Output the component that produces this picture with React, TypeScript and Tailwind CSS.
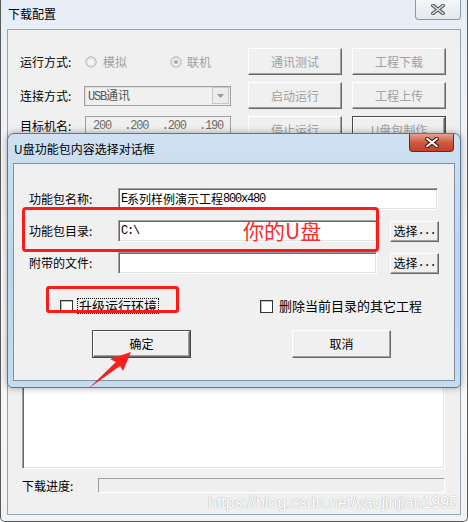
import React from "react";

const F = "font-['Noto_Sans_CJK_SC','Liberation_Sans',sans-serif]";
const M = "font-['Liberation_Mono','Noto_Sans_CJK_SC',monospace] text-[12px] tracking-[-1.2px]";

function Raised({
  children,
  className,
  disabled,
  def,
}: {
  children: React.ReactNode;
  className: string;
  disabled?: boolean;
  def?: boolean;
}) {
  return (
    <div
      className={
        className +
        " flex bg-[#f0f0f0] " +
        (def ? "border border-[#4a4a4a]" : "")
      }
    >
      <div
        className={
          "flex-1 flex items-center justify-center border border-t-white border-l-white border-b-[#696969] border-r-[#696969] shadow-[inset_-1px_-1px_0_#a0a0a0] text-[12px] leading-[14px] " +
          (disabled ? "text-[#a0a0a0]" : "text-black")
        }
      >
        {children}
      </div>
    </div>
  );
}

function Sunken({
  children,
  className,
}: {
  children?: React.ReactNode;
  className: string;
}) {
  return (
    <div
      className={
        className +
        " flex items-center border border-t-[#a0a0a0] border-l-[#a0a0a0] border-b-white border-r-white shadow-[inset_1px_1px_0_#696969,inset_-1px_-1px_0_#e3e3e3]"
      }
    >
      {children}
    </div>
  );
}

function Radio({ on }: { on?: boolean }) {
  return (
    <svg width="12" height="12" viewBox="0 0 12 12">
      <circle cx="6" cy="6" r="5.2" fill="#f4f4f4" stroke="#b4b4b4" strokeWidth="1" />
      <circle cx="6" cy="6" r="4" fill="none" stroke="#dadada" strokeWidth="1" />
      {on && <circle cx="6" cy="6" r="2" fill="#a8a8a8" />}
    </svg>
  );
}

function Check() {
  return (
    <div className="w-[13px] h-[13px] bg-white border border-[#333] shadow-[inset_1px_1px_0_#bdbdbd]" />
  );
}

export default function App() {
  return (
    <div className={"relative w-[468px] h-[522px] overflow-hidden bg-white " + F}>
      {/* main window */}
      <div className="w-full h-full flex flex-col border-l border-r border-b border-[#5a5a5a] rounded-b-[5px] bg-gradient-to-b from-[#e6edf5] via-[#fafbfc] to-[#f0f3f6]">
        <div className="h-[29px] flex items-start justify-between">
          <div className="pl-[7px] pt-[7px] text-[12px] leading-[14px] text-black">下载配置</div>
          <div className="mr-[6px] w-[46px] h-[20px] flex items-center justify-center border border-t-0 border-[#8b97a3] rounded-b-[4px] bg-gradient-to-b from-[#f4f6f8] to-[#e4e9ee]">
            <svg width="14" height="11" viewBox="0 0 14 11">
              <path d="M2 1.5 L12 9.5 M12 1.5 L2 9.5" stroke="#5c5c5c" strokeWidth="3.6" strokeLinecap="square" />
              <path d="M2 1.5 L12 9.5 M12 1.5 L2 9.5" stroke="#dcdcdc" strokeWidth="1.6" strokeLinecap="square" />
            </svg>
          </div>
        </div>
        <div className="mx-[6px] mb-[6px] flex-1 flex flex-col border border-[#9aa2aa] bg-[#f0f0f0]">
          {/* row 1 */}
          <div className="mt-[18px] h-[27px] pl-[12px] flex items-center">
            <div className="w-[228px] flex items-center text-[12px] leading-[14px]">
              <div className="w-[65px]">运行方式:</div>
              <Radio />
              <div className="ml-[6px] w-[67px] text-[#a0a0a0]">模拟</div>
              <Radio on />
              <div className="ml-[5px] text-[#a0a0a0]">联机</div>
            </div>
            <div className="flex gap-[10px]">
              <Raised className="w-[94px] h-[27px]" disabled>通讯测试</Raised>
              <Raised className="w-[94px] h-[27px]" disabled>工程下载</Raised>
            </div>
          </div>
          {/* row 2 */}
          <div className="mt-[7px] h-[27px] pl-[12px] flex items-center">
            <div className="w-[228px] flex items-center text-[12px] leading-[14px]">
              <div className="w-[64px]">连接方式:</div>
              <div className="w-[147px] h-[20px] flex items-center border border-[#a0a0a0] bg-[#f0f0f0] shadow-[inset_1px_1px_0_#e0e0e0]">
                <div className="flex-1 pl-[3px] text-[#555] leading-[14px]">
                  <span className={M}>USB</span>通讯
                </div>
                <div className="w-[17px] h-[17px] mr-[1px] flex items-center justify-center border border-[#c6c6c6] bg-[#ececec]">
                  <svg width="7" height="4" viewBox="0 0 7 4">
                    <path d="M0 0 L7 0 L3.5 4 Z" fill="#9a9a9a" />
                  </svg>
                </div>
              </div>
            </div>
            <div className="flex gap-[10px]">
              <Raised className="w-[94px] h-[27px]" disabled>启动运行</Raised>
              <Raised className="w-[94px] h-[27px]" disabled>工程上传</Raised>
            </div>
          </div>
          {/* row 3 */}
          <div className="mt-[7px] h-[27px] pl-[12px] flex items-start">
            <div className="w-[228px] flex items-center text-[12px] leading-[14px]">
              <div className="w-[65px]">目标机名:</div>
              <div className="w-[146px] h-[19px] flex items-center justify-between px-[7px] border border-[#a0a0a0] bg-[#f0f0f0] text-[#6d6d6d]">
                <span className={M}>200</span>
                <span className={M}>.200</span>
                <span className={M}>.200</span>
                <span className={M}>.190</span>
              </div>
            </div>
            <div className="flex gap-[10px]">
              <Raised className="w-[94px] h-[27px]" disabled>停止运行</Raised>
              <Raised className="w-[94px] h-[27px]" disabled def>U盘包制作</Raised>
            </div>
          </div>
          {/* list box */}
          <Sunken className="mt-[3px] ml-[14px] w-[423px] h-[323px] bg-white" />
          {/* progress */}
          <div className="mt-[9px] ml-[14px] h-[15px] flex items-center text-[12px] leading-[14px]">
            <div className="w-[76px]">下载进度:</div>
            <div className="w-[347px] h-[15px] border border-t-[#a0a0a0] border-l-[#a0a0a0] border-b-white border-r-white bg-[#efefef]" />
          </div>
        </div>
      </div>

      {/* dialog */}
      <div className="absolute left-[7px] top-[133px] w-[454px] h-[255px] flex flex-col rounded-t-[7px] rounded-b-[5px] border border-[#587796] bg-gradient-to-b from-[#cfe1f2] via-[#bcd5ec] to-[#c4dbf0] shadow-[0_0_7px_rgba(0,0,0,0.35)]">
        <div className="h-[29px] flex items-start justify-between">
          <div className="pl-[6px] pt-[8px] text-[12px] leading-[14px] text-black">U盘功能包内容选择对话框</div>
          <div className="mr-[6px] w-[45px] h-[18px] flex items-center justify-center border border-t-0 border-[#6f2a1e] rounded-b-[4px] bg-gradient-to-b from-[#e4a08e] via-[#cf5a42] to-[#c0412b]">
            <svg width="14" height="11" viewBox="0 0 14 11">
              <path d="M2.2 1.8 L11.8 9.2 M11.8 1.8 L2.2 9.2" stroke="#43160e" strokeWidth="4" strokeLinecap="square" />
              <path d="M2.2 1.8 L11.8 9.2 M11.8 1.8 L2.2 9.2" stroke="#ffffff" strokeWidth="2" strokeLinecap="square" />
            </svg>
          </div>
        </div>
        <div className="mx-[5px] mb-[6px] flex-1 flex flex-col border border-[#7e90a3] bg-[#f0f0f0] text-[12px] leading-[14px] text-black">
          {/* A */}
          <div className="mt-[24px] h-[22px] pl-[15px] flex items-center">
            <div className="w-[89px]">功能包名称:</div>
            <Sunken className="w-[320px] h-[22px] bg-white pl-[2px]">
              <span className={M}>E</span>系列样例演示工程<span className={M}>800x480</span>
            </Sunken>
          </div>
          {/* B */}
          <div className="mt-[10px] h-[22px] pl-[15px] flex items-center">
            <div className="w-[89px]">功能包目录:</div>
            <Sunken className="w-[259px] h-[22px] bg-white pl-[2px]">
              <span className={M}>C:\</span>
            </Sunken>
            <Raised className="ml-[13px] w-[49px] h-[21px]">
              选择<span className={M}>...</span>
            </Raised>
          </div>
          {/* C */}
          <div className="mt-[10px] h-[22px] pl-[15px] flex items-center">
            <div className="w-[89px]">附带的文件:</div>
            <Sunken className="w-[259px] h-[22px] bg-white" />
            <Raised className="ml-[13px] w-[49px] h-[21px]">
              选择<span className={M}>...</span>
            </Raised>
          </div>
          {/* checkboxes */}
          <div className="mt-[25px] h-[14px] pl-[46px] flex items-center text-[13px]">
            <div className="w-[200px] flex items-center">
              <Check />
              <div className="ml-[4px] px-[1px] border border-dotted border-black leading-[14px]">升级运行环境</div>
            </div>
            <Check />
            <div className="ml-[6px]">删除当前目录的其它工程</div>
          </div>
          {/* buttons */}
          <div className="mt-[17px] pl-[78px] flex">
            <Raised className="w-[99px] h-[28px]" def>确定</Raised>
            <Raised className="ml-[101px] w-[99px] h-[28px]">取消</Raised>
          </div>
        </div>
      </div>

      {/* annotations */}
      <div className="absolute left-[22px] top-[207px] w-[357px] h-[45px] border-[3px] border-[#ff1a1a] rounded-[4px]" />
      <div className="absolute left-[46px] top-[286px] w-[133px] h-[27px] border-[3px] border-[#ff1a1a] rounded-[3px]" />
      <div className="absolute left-[243px] top-[215px] text-[21px] leading-[30px] text-[#ff2a2a]">你的U盘</div>
      <svg className="absolute left-0 top-0" width="468" height="522" viewBox="0 0 468 522">
        <polygon points="131,352 110,359 116,362 89,388 120,366 123,371" fill="#ff1c1c" />
      </svg>
      <div className="absolute left-[208px] top-[494px] font-['Liberation_Sans',sans-serif] text-[16px] leading-[18px] text-white [text-shadow:0_0_1px_#b0b0b0,0_0_1px_#b0b0b0]">
        https://blog.csdn.net/yaojinjian1995
      </div>
    </div>
  );
}
